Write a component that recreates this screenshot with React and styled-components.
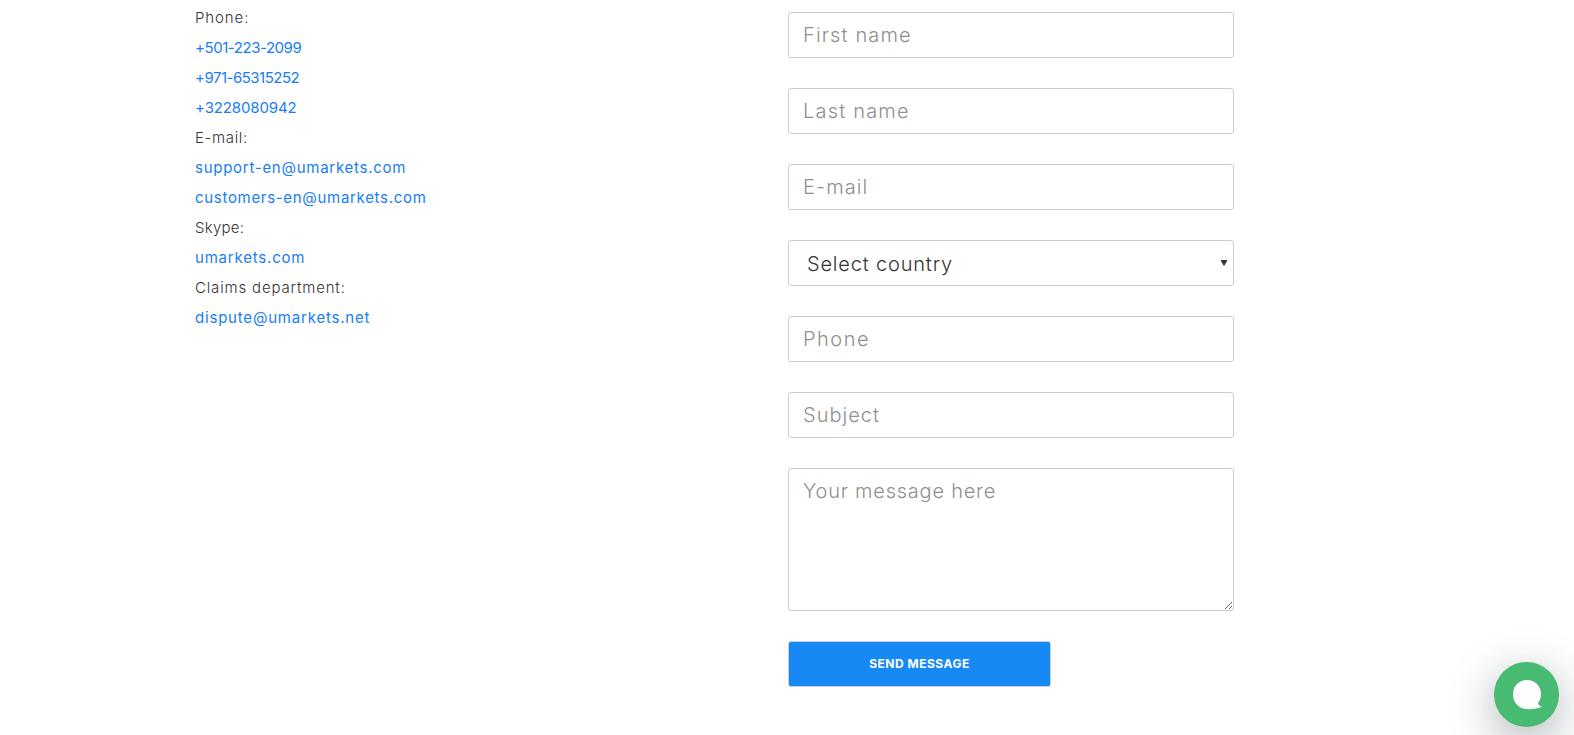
import React, { useState } from "react";
import styled, { createGlobalStyle, css } from "styled-components";

const GlobalStyle = createGlobalStyle`
  * {
    box-sizing: border-box;
  }

  body {
    margin: 0;
    background-color: #fff;
    font-family: Inter, "Open Sans", sans-serif;
    overflow: hidden;
  }
`;

const Page = styled.main`
  display: grid;
  grid-template-columns: 593px 446px;
  width: 100%;
  height: 735px;
  padding-left: 195px;
`;

const Contacts = styled.address`
  display: flex;
  flex-direction: column;
  align-items: flex-start;
  padding-top: 3px;
  font-size: 15px;
  font-style: normal;
  line-height: 30px;
`;

const Label = styled.span`
  color: #333;
  font-weight: 300;
  white-space: nowrap;
  letter-spacing: ${(props) => props.$tracking}px;
`;

const ContactLink = styled.a`
  color: #177df5;
  text-decoration: none;
  white-space: nowrap;
  letter-spacing: ${(props) => props.$tracking}px;
`;

const Form = styled.form`
  display: flex;
  flex-direction: column;
  gap: 30px;
  padding-top: 12px;
`;

const field = css`
  display: block;
  width: 100%;
  height: 46px;
  margin: 0;
  padding: 0 14px;
  border: 1px solid #ccc;
  border-radius: 3px;
  outline: none;
  background-color: #fff;
  color: #333;
  font-family: inherit;
  font-size: 20px;
  font-weight: 300;
  letter-spacing: ${(props) => props.$tracking}px;

  &::placeholder {
    color: #8f8f8f;
    opacity: 1;
  }
`;

const Input = styled.input`
  ${field}
`;

const TextArea = styled.textarea`
  ${field}
  height: 143px;
  padding: 8px 14px;
  line-height: 28px;
  resize: vertical;
`;

const Select = styled.select`
  ${field}
  padding: 2px 18px 0;
  appearance: none;
  line-height: 28px;
`;

const SelectBox = styled.div`
  position: relative;
`;

const Arrow = styled.svg`
  position: absolute;
  top: 20px;
  right: 7px;
  width: 6px;
  height: 6px;
  pointer-events: none;
`;

const SubmitButton = styled.button`
  width: 263px;
  height: 46px;
  padding: 0 0 2px;
  border: 1px solid #ccc;
  border-radius: 3px;
  background-color: #1789f5;
  color: #fff;
  font-family: inherit;
  font-size: 12px;
  font-weight: 700;
  letter-spacing: 0.5px;
  text-transform: uppercase;
  cursor: pointer;
`;

const ChatButton = styled.button`
  position: fixed;
  right: 15px;
  bottom: 8px;
  width: 65px;
  height: 65px;
  padding: 0;
  border: none;
  border-radius: 50%;
  background-color: #46bb71;
  box-shadow: 0 12px 45px rgba(23, 32, 44, 0.36);
  cursor: pointer;

  svg {
    display: block;
  }
`;

const contacts = [
  { text: "Phone:", tracking: 0.9 },
  { text: "+501-223-2099", tracking: -0.45, href: "tel:+5012232099" },
  { text: "+971-65315252", tracking: -0.5, href: "tel:+97165315252" },
  { text: "+3228080942", tracking: -0.12, href: "tel:+3228080942" },
  { text: "E-mail:", tracking: 0.65 },
  {
    text: "support-en@umarkets.com",
    tracking: 0.73,
    href: "mailto:support-en@umarkets.com",
  },
  {
    text: "customers-en@umarkets.com",
    tracking: 0.69,
    href: "mailto:customers-en@umarkets.com",
  },
  { text: "Skype:", tracking: 0.25 },
  { text: "umarkets.com", tracking: 0.8, href: "skype:umarkets.com" },
  { text: "Claims department:", tracking: 0.83 },
  {
    text: "dispute@umarkets.net",
    tracking: 0.8,
    href: "mailto:dispute@umarkets.net",
  },
];

function ContactForm() {
  const [country, setCountry] = useState("");

  return (
    <Form onSubmit={(e) => e.preventDefault()}>
      <Input name="firstName" placeholder="First name" $tracking={1.14} />
      <Input name="lastName" placeholder="Last name" $tracking={1.2} />
      <Input name="email" placeholder="E-mail" $tracking={1.1} />
      <SelectBox>
        <Select
          name="country"
          value={country}
          onChange={(e) => setCountry(e.target.value)}
          $tracking={0.82}
        >
          <option value="">Select country</option>
        </Select>
        <Arrow viewBox="0 0 6 6">
          <path d="M0 0h6v1L3.5 5.5h-1L0 1z" fill="#333" />
        </Arrow>
      </SelectBox>
      <Input name="phone" placeholder="Phone" $tracking={1.51} />
      <Input name="subject" placeholder="Subject" $tracking={1.01} />
      <TextArea
        name="message"
        placeholder="Your message here"
        $tracking={0.77}
      />
      <SubmitButton type="submit">Send message</SubmitButton>
    </Form>
  );
}

function App() {
  return (
    <>
      <GlobalStyle />
      <Page>
        <Contacts>
          {contacts.map(({ text, tracking, href }) =>
            href ? (
              <ContactLink key={text} href={href} $tracking={tracking}>
                {text}
              </ContactLink>
            ) : (
              <Label key={text} $tracking={tracking}>
                {text}
              </Label>
            )
          )}
        </Contacts>
        <ContactForm />
      </Page>
      <ChatButton aria-label="Open chat">
        <svg width="65" height="65" viewBox="0 0 65 65">
          <path
            d="M33 18C25 18 19 24.2 19 32.2C19 41 25.5 47.3 34.5 47.3C40 47.3 45 46.6 48.2 44.6C46.3 44 44.6 43 43.8 41.4C45.8 38.9 47 35.7 47 32.2C47 24.2 41 18 33 18Z"
            fill="#fff"
          />
        </svg>
      </ChatButton>
    </>
  );
}

export default App;
